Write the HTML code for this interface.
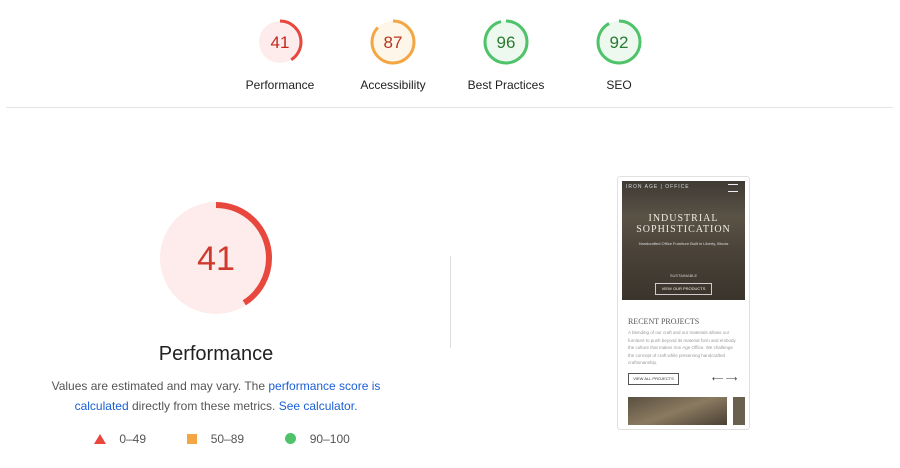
<!DOCTYPE html>
<html><head><style>
body{margin:0;width:900px;height:468px;background:#fff;font-family:"Liberation Sans",Arial,sans-serif;position:relative;overflow:hidden;color:#212121}
.g{position:absolute;top:18px;width:110px;text-align:center}
.g svg{display:block;margin:0 auto}
.g .l{font-size:12px;margin-top:12px;color:#212121}
.abs{position:absolute}
</style></head><body>
<div class="g" style="left:225px"><svg width="48" height="48" viewBox="0 0 48 48"><circle cx="24" cy="24" r="21" fill="#fdeceb"/><circle cx="24" cy="24" r="21" fill="none" stroke="#e8473e" stroke-width="3" stroke-dasharray="54.1 200" transform="rotate(-90 24 24)"/><text x="24" y="30" text-anchor="middle" font-size="17" fill="#c3261e" font-family="Liberation Sans">41</text></svg><div class="l">Performance</div></div>
<div class="g" style="left:338px"><svg width="48" height="48" viewBox="0 0 48 48"><circle cx="24" cy="24" r="21" fill="#fff6ea"/><circle cx="24" cy="24" r="21" fill="none" stroke="#f2a744" stroke-width="3" stroke-dasharray="114.8 200" transform="rotate(-90 24 24)"/><text x="24" y="30" text-anchor="middle" font-size="17" fill="#b7351e" font-family="Liberation Sans">87</text></svg><div class="l">Accessibility</div></div>
<div class="g" style="left:451px"><svg width="48" height="48" viewBox="0 0 48 48"><circle cx="24" cy="24" r="21" fill="#edf8ef"/><circle cx="24" cy="24" r="21" fill="none" stroke="#4ec36a" stroke-width="3" stroke-dasharray="126.7 200" transform="rotate(-90 24 24)"/><text x="24" y="30" text-anchor="middle" font-size="17" fill="#2b7a32" font-family="Liberation Sans">96</text></svg><div class="l">Best Practices</div></div>
<div class="g" style="left:564px"><svg width="48" height="48" viewBox="0 0 48 48"><circle cx="24" cy="24" r="21" fill="#edf8ef"/><circle cx="24" cy="24" r="21" fill="none" stroke="#4ec36a" stroke-width="3" stroke-dasharray="121.4 200" transform="rotate(-90 24 24)"/><text x="24" y="30" text-anchor="middle" font-size="17" fill="#2b7a32" font-family="Liberation Sans">92</text></svg><div class="l">SEO</div></div>
<div class="abs" style="left:6px;top:107px;width:887px;height:1px;background:#e4e4e4"></div>

<svg class="abs" style="left:158px;top:200px" width="116" height="116" viewBox="0 0 116 116"><circle cx="58" cy="58" r="56" fill="#fdeceb"/><circle cx="58" cy="58" r="53" fill="none" stroke="#e8473e" stroke-width="6" stroke-dasharray="136.5 400" transform="rotate(-90 58 58)"/><text x="58" y="70" text-anchor="middle" font-size="34" fill="#d03a2e" font-family="Liberation Sans">41</text></svg>
<div class="abs" style="left:116px;top:343px;width:200px;text-align:center;font-size:20px">Performance</div>
<div class="abs" style="left:40px;top:376px;width:352px;text-align:center;font-size:12px;line-height:20px;color:#555">Values are estimated and may vary. The <span style="color:#1a5fd6">performance score is calculated</span> directly from these metrics. <span style="color:#1a5fd6">See calculator.</span></div>
<div class="abs" style="top:432px;left:94px;font-size:12px;color:#555;white-space:nowrap">
<span style="display:inline-block;width:0;height:0;border-left:6px solid transparent;border-right:6px solid transparent;border-bottom:10px solid #e8473e;vertical-align:-1px"></span>&nbsp;&nbsp;&nbsp;&nbsp;0–49
<span style="display:inline-block;width:10px;height:10px;background:#f2a744;margin-left:38px;vertical-align:-1px"></span>&nbsp;&nbsp;&nbsp;&nbsp;50–89
<span style="display:inline-block;width:11px;height:11px;border-radius:50%;background:#4ec36a;margin-left:38px;vertical-align:-1px"></span>&nbsp;&nbsp;&nbsp;&nbsp;90–100</div>
<div class="abs" style="left:450px;top:256px;width:1px;height:92px;background:#ddd"></div>

<div class="abs" style="left:617px;top:176px;width:131px;height:252px;border:1px solid #e0e0e0;border-radius:3px;background:#fff;overflow:hidden">
<div class="abs" style="left:4px;top:4px;width:123px;height:119px;background:linear-gradient(180deg,#3e3a34 0%,#5a5245 30%,#4a4238 60%,#3a342c 100%)"></div>
<div class="abs" style="left:8px;top:7px;font-size:5px;color:#ddd;letter-spacing:1px">IRON AGE | OFFICE</div>
<div class="abs" style="left:110px;top:7px;width:10px;height:6px;border-top:1px solid #eee;border-bottom:1px solid #eee"></div>
<div class="abs" style="left:4px;top:36px;width:123px;text-align:center;font-family:'Liberation Serif',serif;font-size:10px;line-height:11px;color:#f0ece4;letter-spacing:1px">INDUSTRIAL<br>SOPHISTICATION</div>
<div class="abs" style="left:4px;top:64px;width:123px;text-align:center;font-size:4px;color:#ddd">Handcrafted Office Furniture Built in Liberty, Illinois</div>
<div class="abs" style="left:4px;top:96px;width:123px;text-align:center;font-size:4px;color:#ccc">SUSTAINABLE</div>
<div class="abs" style="left:37px;top:106px;width:55px;height:10px;border:1px solid #ccc;font-size:4px;color:#eee;text-align:center;line-height:10px">VIEW OUR PRODUCTS</div>
<div class="abs" style="left:10px;top:140px;font-family:'Liberation Serif',serif;font-size:8px;color:#555">RECENT PROJECTS</div>
<div class="abs" style="left:10px;top:152px;width:112px;font-size:4.5px;line-height:7.5px;color:#999">A blending of our craft and our materials allows our furniture to push beyond its material form and embody the culture that makes Iron Age Office. We challenge the concept of craft while preserving handcrafted craftsmanship.</div>
<div class="abs" style="left:10px;top:196px;width:49px;height:10px;border:1px solid #555;font-size:4px;text-align:center;line-height:10px;color:#333">VIEW ALL PROJECTS</div>
<div class="abs" style="left:94px;top:197px;font-size:8px;color:#333">⟵&nbsp;⟶</div>
<div class="abs" style="left:10px;top:220px;width:99px;height:28px;background:linear-gradient(160deg,#5a5040,#8a7a60,#4a4035)"></div>
<div class="abs" style="left:115px;top:220px;width:12px;height:28px;background:#6a6050"></div>
</div>
</body></html>
